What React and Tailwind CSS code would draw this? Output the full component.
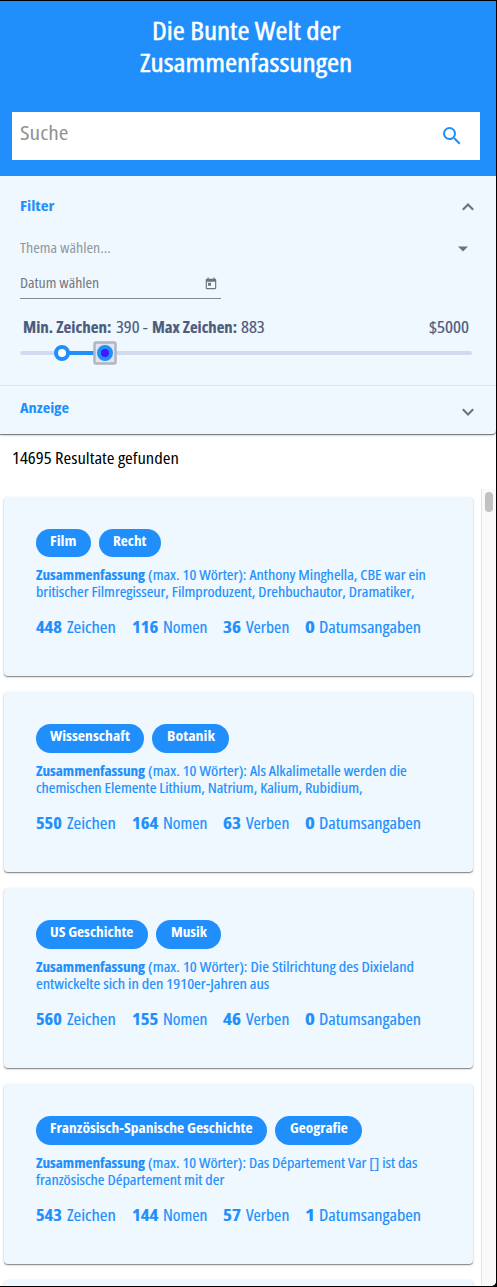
import { useLayoutEffect, useRef, useState } from "react";

// Condenses a run of text so that it fills the given width.
function Fit({ w, className = "", children }) {
  const ref = useRef(null);
  const [scale, setScale] = useState(1);
  useLayoutEffect(() => {
    setScale(w / ref.current.offsetWidth);
  }, [w]);
  return (
    <span className={`block shrink-0 whitespace-nowrap ${className}`} style={{ width: w }}>
      <span ref={ref} className="inline-block origin-left align-top" style={{ transform: `scaleX(${scale})` }}>
        {children}
      </span>
    </span>
  );
}

const cards = [
  {
    tags: [["Film", 26], ["Recht", 33.5]],
    first: ["Anthony Minghella, CBE war ein", 278],
    second: ["britischer Filmregisseur, Filmproduzent, Drehbuchautor, Dramatiker,", 378],
    stats: ["448", "116", "36", "0"],
  },
  {
    tags: [["Wissenschaft", 79.5], ["Botanik", 47.5]],
    first: ["Als Alkalimetalle werden die", 259],
    second: ["chemischen Elemente Lithium, Natrium, Kalium, Rubidium,", 326],
    stats: ["550", "164", "63", "0"],
  },
  {
    tags: [["US Geschichte", 83.5], ["Musik", 35.5]],
    first: ["Die Stilrichtung des Dixieland", 266.5],
    second: ["entwickelte sich in den 1910er-Jahren aus", 233],
    stats: ["560", "155", "46", "0"],
  },
  {
    tags: [["Französisch-Spanische Geschichte", 202.5], ["Geografie", 57.5]],
    first: ["Das Département Var [] ist das", 269.5],
    second: ["französische Département mit der", 188],
    stats: ["543", "144", "57", "1"],
  },
];

const statLabels = [["Zeichen", 49, 26], ["Nomen", 44, 26.5], ["Verben", 43, 18.5], ["Datumsangaben", 102, 9.5]];

function Card({ card }) {
  return (
    <article className="h-[179.9px] shrink-0 rounded-[4px] bg-[#eff7ff] px-8 pt-8 text-[#208ffb] shadow-[0_1px_1px_rgba(0,0,0,0.4),0_1px_3px_rgba(0,0,0,0.16)]">
      <div className="flex gap-2">
        {card.tags.map(([label, w]) => (
          <div key={label} className="h-[28.5px] rounded-full bg-[#208ffb] px-[14.3px] text-[14px] leading-[24.6px] font-bold text-white">
            <Fit w={w + 0.3}>{label}</Fit>
          </div>
        ))}
      </div>
      <div className="mt-[10.1px] text-[13.5px] leading-[17px] [-webkit-text-stroke:0.15px]">
        <div className="flex gap-[3px]">
          <Fit w={109} className="font-bold">Zusammenfassung</Fit>
          <Fit w={card.first[1]}>(max. 10 Wörter): {card.first[0]}</Fit>
        </div>
        <Fit w={card.second[1]}>{card.second[0]}</Fit>
      </div>
      <div className="mt-[15.8px] flex gap-4 text-[15.5px] leading-5 [-webkit-text-stroke:0.15px]">
        {statLabels.map(([label, w, nw], i) => (
          <div key={label} className="flex gap-[4.5px]">
            <Fit w={nw} className="font-bold">{card.stats[i]}</Fit>
            <Fit w={w}>{label}</Fit>
          </div>
        ))}
      </div>
    </article>
  );
}

function Chevron({ up }) {
  return (
    <svg width="12" height="8" viewBox="0 0 12 8" fill="none" stroke="#6f7377" strokeWidth="2.1">
      <path d={up ? "M.8 6.8 6 1.6l5.2 5.2" : "M.8 1.2 6 6.4l5.2-5.2"} />
    </svg>
  );
}

export default function App() {
  return (
    <div className="h-[1287px] w-[497px] overflow-hidden bg-black pt-px pr-px pb-px font-['Open_Sans','Noto_Sans',sans-serif] font-stretch-[80%]">
      <div className="flex h-full flex-col overflow-hidden rounded-br-[5px] bg-white">
        <header className="h-[175px] shrink-0 bg-[#208ffb] px-3 pt-[13px]">
          <h1 className="flex flex-col items-center pr-[4px] text-[25px] leading-8 font-medium text-white [-webkit-text-stroke:0.45px]">
            <Fit w={188}>Die Bunte Welt der</Fit>
            <Fit w={212}>Zusammenfassungen</Fit>
          </h1>
          <div className="mt-[34px] mr-1 flex h-12 justify-between bg-white px-2">
            <Fit w={48} className="text-[20px] leading-[42px] text-[#929292]">Suche</Fit>
            <svg className="mt-3 mr-2 h-6 w-6 fill-[#208ffb]" viewBox="0 0 24 24">
              <path d="M15.5 14h-.79l-.28-.27A6.471 6.471 0 0 0 16 9.5 6.5 6.5 0 1 0 9.5 16c1.61 0 3.09-.59 4.23-1.57l.27.28v.79l5 4.99L20.49 19l-4.99-5zm-6 0C7.01 14 5 11.99 5 9.5S7.01 5 9.5 5 14 7.01 14 9.5 11.99 14 9.5 14z" />
            </svg>
          </div>
        </header>

        <section className="flex h-[210px] shrink-0 flex-col bg-[#eff7ff] px-5 pt-[17px] shadow-[inset_0_-1px_1px_rgba(0,0,0,0.05)]">
          <div className="flex justify-between text-[15px] leading-6">
            <Fit w={34} className="font-bold text-[#208ffb]">Filter</Fit>
            <div className="pt-[10px] pr-[2px]"><Chevron up /></div>
          </div>
          <div className="mt-[21px] flex justify-between text-[14px] leading-5 text-[#92979d]">
            <Fit w={91}>Thema wählen...</Fit>
            <svg className="mt-[8px] mr-2" width="10" height="6" viewBox="0 0 10 6"><path d="M0 .5h10L5 5.5z" fill="#6f7377" /></svg>
          </div>
          <div className="mt-[14px] flex h-[27px] w-[201px] justify-between border-b border-[#858a90] pr-[3px] text-[14px] leading-[22px] text-[#73777c]">
            <Fit w={79}>Datum wählen</Fit>
            <svg className="mt-[5px] h-[14px] w-[14px] fill-[#6f7377]" viewBox="0 0 24 24">
              <path d="M19 3h-1V1h-2v2H8V1H6v2H5c-1.11 0-1.99.9-1.99 2L3 19a2 2 0 0 0 2 2h14c1.1 0 2-.9 2-2V5c0-1.1-.9-2-2-2zm0 16H5V8h14v11zM7 10h5v5H7z" />
            </svg>
          </div>
          <div className="mt-[18px] flex gap-1 pr-[3px] pl-[3px] text-[15.5px] leading-5 text-[#4d5b7c] [-webkit-text-stroke:0.15px]">
            <Fit w={89} className="font-bold">Min. Zeichen:</Fit>
            <Fit w={32}>390 -</Fit>
            <Fit w={85} className="font-bold">Max Zeichen:</Fit>
            <Fit w={24}>883</Fit>
            <Fit w={40} className="mr-1 ml-auto">$5000</Fit>
          </div>
          <svg className="mt-[3px] -ml-1 block shrink-0" width="460" height="26" viewBox="0 0 460 26">
            <path d="M6 13h448" stroke="#d2daef" strokeWidth="4" strokeLinecap="round" />
            <path d="M46 13h43" stroke="#208ffb" strokeWidth="4" />
            <circle cx="46" cy="13" r="6" fill="white" stroke="#208ffb" strokeWidth="4" />
            <rect x="78.5" y="2.5" width="21" height="21" rx="1.5" fill="#dfe5ef" stroke="#b1b7c2" strokeWidth="2.5" />
            <circle cx="89" cy="13" r="6" fill="#4219f5" stroke="#208ffb" strokeWidth="4" />
          </svg>
        </section>

        <section className="relative flex h-12 shrink-0 justify-between rounded-br-[4px] bg-[#eff7ff] px-5 pt-[9px] text-[15px] leading-6 shadow-[0_1px_1px_rgba(0,0,0,0.48),0_1px_3px_rgba(0,0,0,0.2)]">
          <Fit w={49} className="font-bold text-[#208ffb]">Anzeige</Fit>
          <div className="pt-[13px] pr-[2px]"><Chevron /></div>
        </section>

        <div className="h-[55px] shrink-0 px-3 pt-[12px] text-[15.5px] leading-6 text-black">
          <Fit w={167}>14695 Resultate gefunden</Fit>
        </div>

        <main className="flex min-h-0 flex-1 overflow-hidden">
          <div className="flex w-[481px] shrink-0 flex-col gap-4 overflow-hidden pt-[7.6px] pr-2 pl-1">
            {cards.map((card) => <Card key={card.stats[0]} card={card} />)}
            <div className="h-20 shrink-0 rounded-[4px] bg-[#eff7ff] shadow-[0_1px_3px_rgba(0,0,0,0.2)]" />
          </div>
          <div className="flex flex-1 justify-center border-l border-[#e4e4e4] bg-[#f9f9f9] pt-[3px]">
            <div className="h-5 w-2 rounded-full bg-[#c1c1c1]" />
          </div>
        </main>
      </div>
    </div>
  );
}
